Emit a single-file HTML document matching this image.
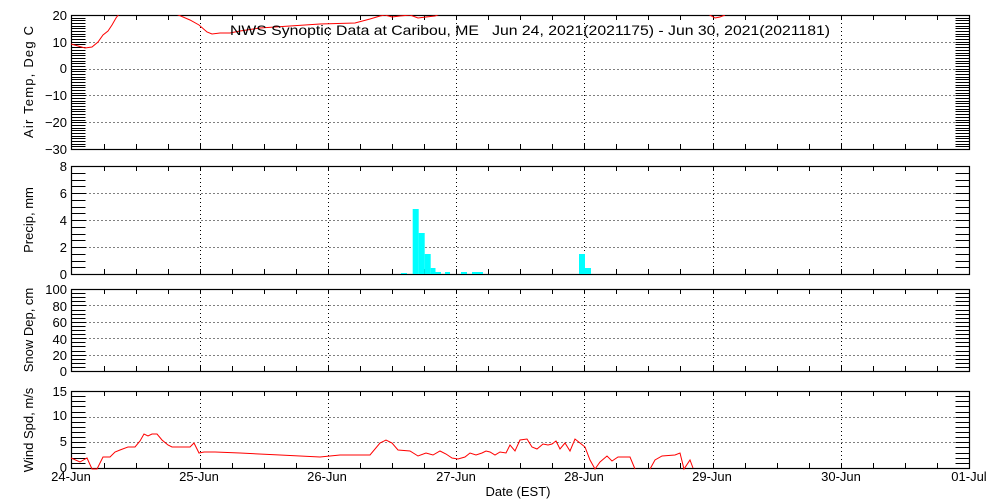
<!DOCTYPE html>
<html><head><style>
html,body{margin:0;padding:0;background:#fff;}
svg{display:block;font-family:"Liberation Sans",sans-serif;}
</style></head><body>
<svg id="s" width="1000" height="500" xmlns="http://www.w3.org/2000/svg">
<g font-size="13" fill="#000" text-anchor="end">
<text x="67" y="20">20</text><text x="67" y="47">10</text><text x="67" y="73">0</text><text x="67" y="100">−10</text><text x="67" y="127">−20</text><text x="67" y="154">−30</text>
<text x="67" y="171">8</text><text x="67" y="198">6</text><text x="67" y="225">4</text><text x="67" y="252">2</text><text x="67" y="279">0</text>
<text x="67" y="294">100</text><text x="67" y="311">80</text><text x="67" y="327">60</text><text x="67" y="344">40</text><text x="67" y="360">20</text><text x="67" y="376">0</text>
<text x="67" y="396">15</text><text x="67" y="420">10</text><text x="67" y="446">5</text><text x="67" y="472">0</text>
</g>
<g font-size="13" text-anchor="middle">
<text transform="translate(33,82) rotate(-90)" textLength="112">Air Temp, Deg C</text>
<text transform="translate(33,220) rotate(-90)">Precip, mm</text>
<text transform="translate(33,330) rotate(-90)">Snow Dep, cm</text>
<text transform="translate(33,430) rotate(-90)">Wind Spd, m/s</text>
<text x="71" y="481">24-Jun</text><text x="199" y="481">25-Jun</text><text x="327" y="481">26-Jun</text><text x="456" y="481">27-Jun</text><text x="584" y="481">28-Jun</text><text x="712" y="481">29-Jun</text><text x="841" y="481">30-Jun</text><text x="969" y="481">01-Jul</text>
<text x="518" y="496">Date (EST)</text>
</g>
<g id="g"></g>
<text x="230" y="35" font-size="14" textLength="600" lengthAdjust="spacingAndGlyphs" style="white-space:pre" xml:space="preserve">NWS Synoptic Data at Caribou, ME   Jun 24, 2021(2021175) - Jun 30, 2021(2021181)</text>
</svg>
<script>
var g=document.getElementById('g'),h='';
var X0=71.5,DX=128.2,XR=969.5;
function L(x1,y1,x2,y2,extra){h+='<line x1="'+x1+'" y1="'+y1+'" x2="'+x2+'" y2="'+y2+'" stroke="#000" '+(extra||'')+'/>';}
var P=[[15,149,20,-30,1,[10,0,-10,-20]],[166,274,8,0,0.5,[6,4,2]],[289,371,100,0,5,[80,60,40,20]],[391,468,15,0,1,[10,5]]];
P.forEach(function(p){var t=p[0],b=p[1],vmax=p[2],vmin=p[3],st=p[4];
 function Y(v){return t+(vmax-v)*(b-t)/(vmax-vmin);}
 for(var v=vmin;v<=vmax+1e-6;v+=st){var y=Math.round(Y(v))+0.5;L(X0,y,X0+14,y);L(XR-14,y,XR,y);}
 p[5].forEach(function(v){var y=Math.round(Y(v))+0.5;L(X0+14,y,XR-14,y,'stroke-dasharray="1 3"');});
 for(var d=1;d<7;d++){var x=Math.round(X0+d*DX)+0.5;L(x,t,x,b,'stroke-dasharray="1 3"');}
 for(var q=1;q<28;q++){var x=Math.round(X0+q*DX/4)+0.5;L(x,t,x,t+5);L(x,b,x,b-5);}
 h+='<rect x="'+X0+'" y="'+(t+0.5)+'" width="'+(XR-X0)+'" height="'+(b-t)+'" fill="none" stroke="#000" stroke-width="1.2"/>';
});
var bars=[[401,407,273],[412.7,418.7,209],[418.7,424.7,233],[424.7,430.7,254],[430.7,435.5,268],[435.5,441,272],[445,450,272],[461,467,272],[472,483,272],[579,585,254],[585,591,268]];
bars.forEach(function(r){h+='<rect x="'+r[0]+'" y="'+r[2]+'" width="'+(r[1]-r[0])+'" height="'+(274-r[2])+'" fill="#00ffff"/>';});
var T="71,44 78,46 85,48 92,47 98,42 103,35 108,31 112,25 116,18 119,14";
var T2="176,14 190,20 199,25 207,32 212,34 220,33 230,33 240,31 260,28 290,26 320,24 355,23 370,19 380,16 385,15 392,17 400,16 410,15 418,18 426,17 435,16 440,14";
var T3="708,14 715,18 720,17 725,15";
var W="71,458 80,462 87,458 92,469 97,469 103,457 110,457 115,452 120,450 128,447 135,447 140,441 144,434 148,436 152,434 157,434 162,440 168,445 172,447 180,447 190,447 194,443 199,453 204,452 215,452 240,453 280,455 320,457 340,455 370,455 380,443 386,440 392,443 398,450 410,451 418,456 426,453 433,455 440,451 446,454 452,458 458,459 465,457 470,453 476,455 482,453 486,451 490,452 495,455 500,452 506,453 510,445 515,451 520,440 527,439 532,447 537,449 543,444 548,445 552,444 556,441 560,449 565,443 570,451 575,439 580,443 585,447 590,460 595,469 600,462 607,456 612,461 618,457 630,457 635,469";
var W2="650,469 655,460 662,456 675,455 680,453 684,469 690,460 693,468";
h+='<defs><clipPath id="c1"><rect x="71" y="15" width="899" height="134"/></clipPath></defs>';
[T,T2,T3].forEach(function(s){h+='<polyline clip-path="url(#c1)" points="'+s+'" fill="none" stroke="#f00"/>';});
[W,W2].forEach(function(s){h+='<polyline points="'+s+'" fill="none" stroke="#f00"/>';});
g.innerHTML=h;
</script>
</body></html>
